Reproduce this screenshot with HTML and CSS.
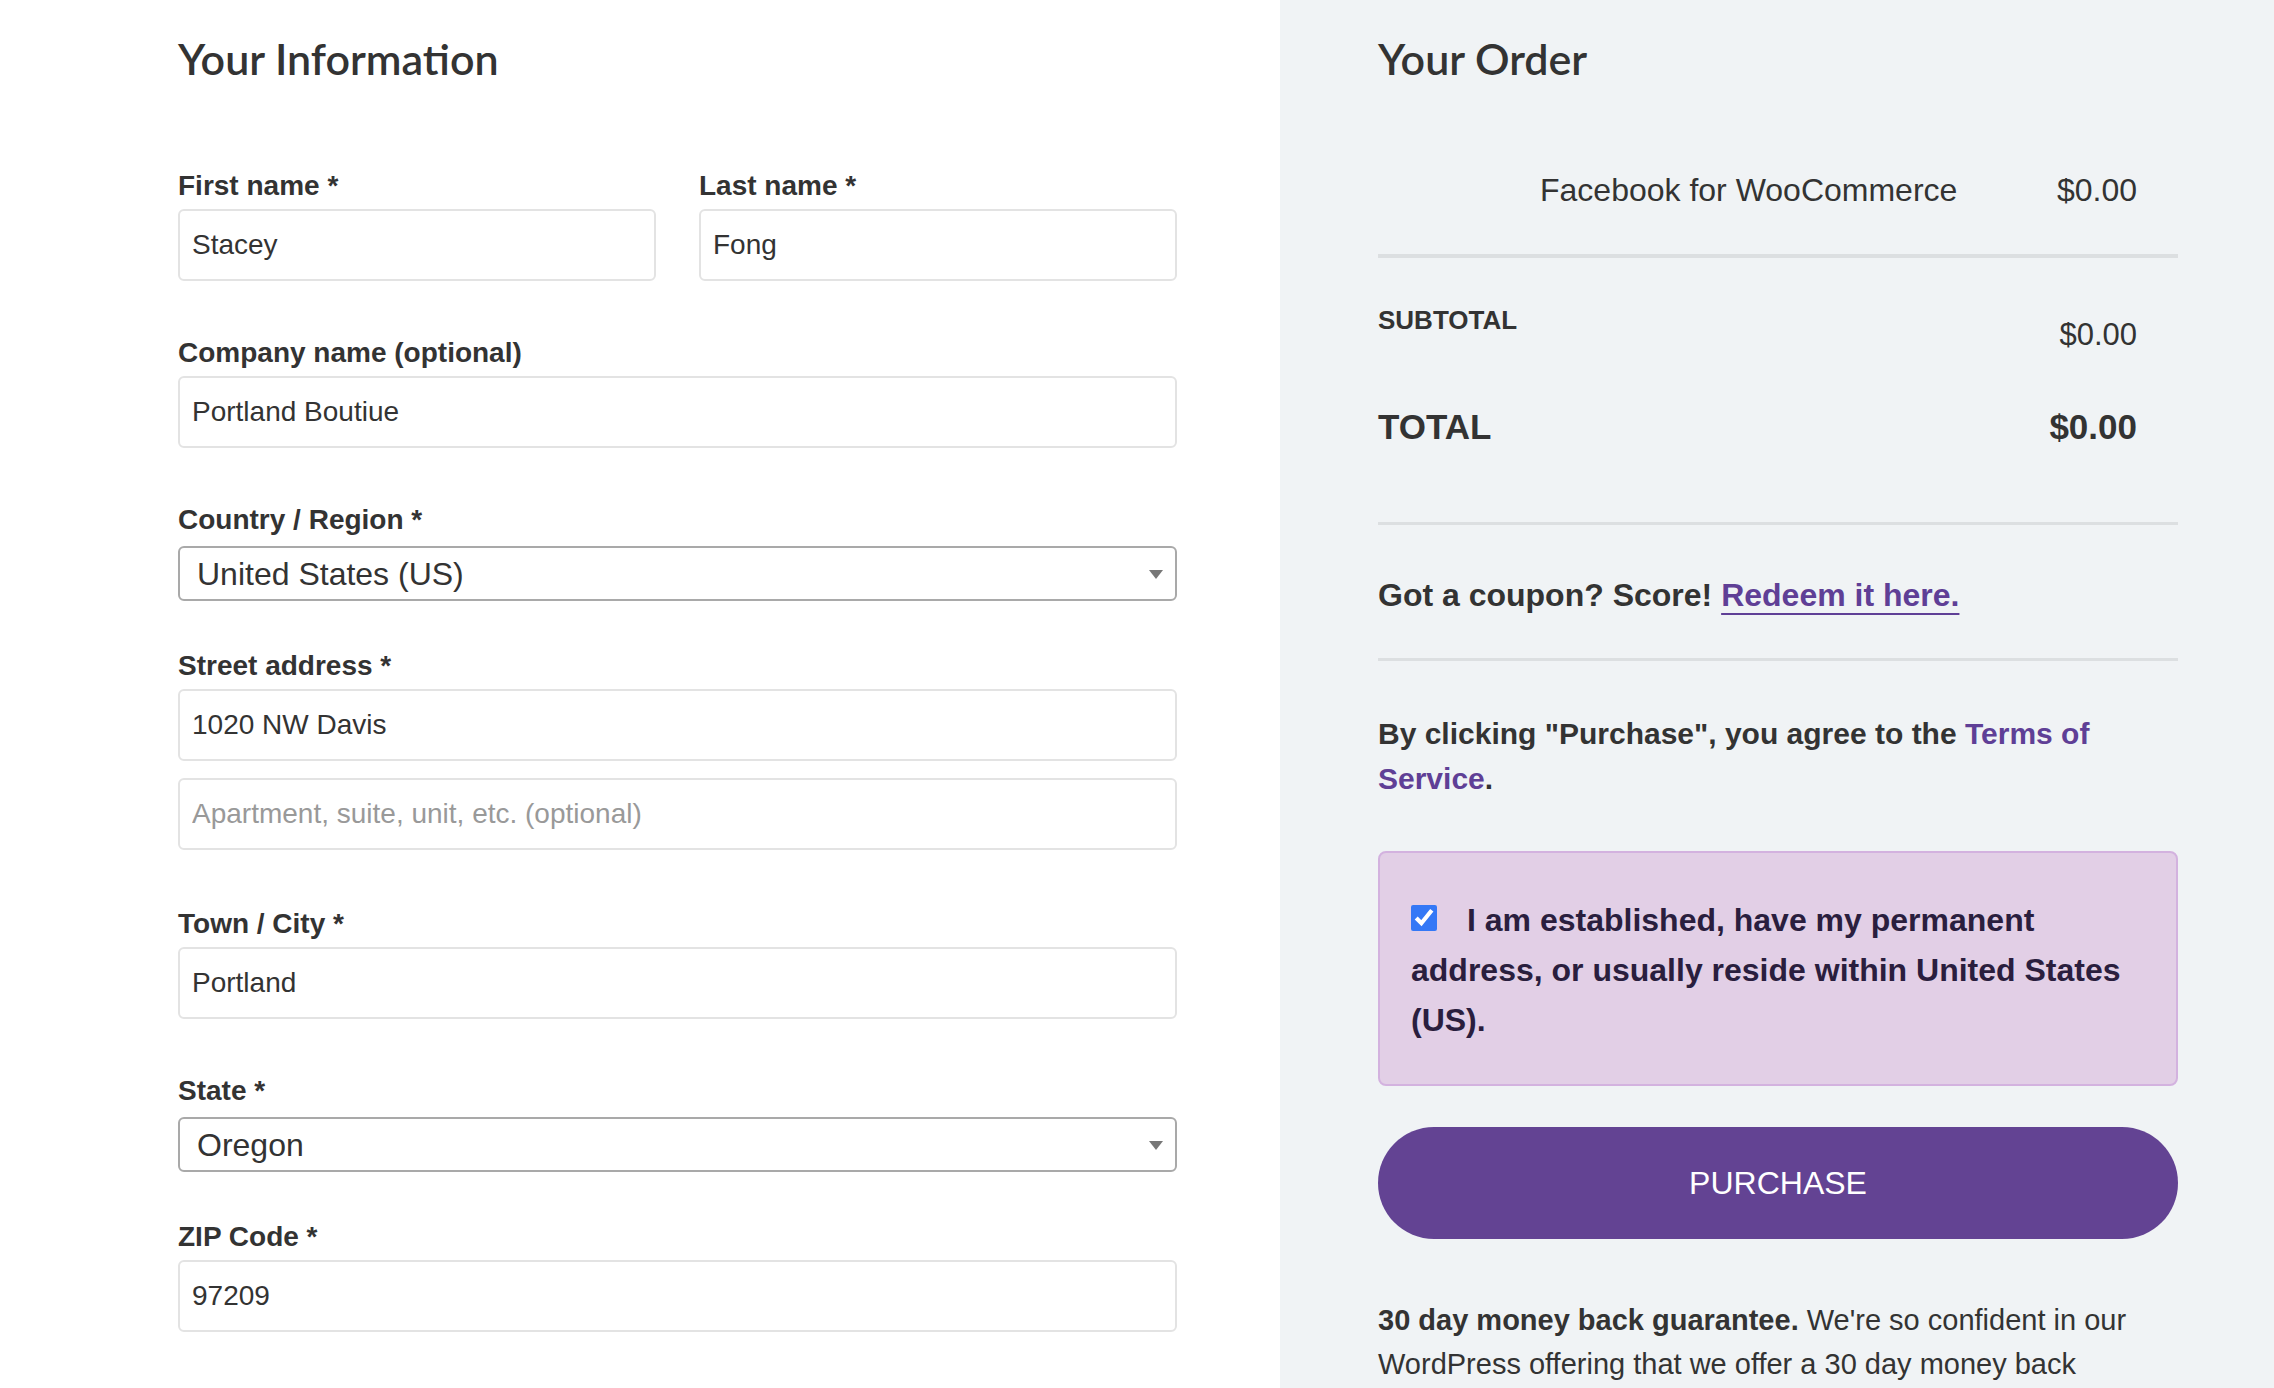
FILE: index.html
```html
<!DOCTYPE html>
<html lang="en">
<head>
  <meta charset="UTF-8">
  <meta name="viewport" content="width=device-width, initial-scale=1.0">
  <title>Checkout</title>
  <link rel="stylesheet" href="styles.css">
</head>
<body>
  <div class="checkout">
    <section class="info">
      <h2 class="section-title">Your Information</h2>
      <form class="info-form">
        <div class="field-row">
          <div class="field">
            <label for="firstName">First name *</label>
            <input type="text" id="firstName" value="Stacey">
          </div>
          <div class="field">
            <label for="lastName">Last name *</label>
            <input type="text" id="lastName" value="Fong">
          </div>
        </div>

        <div class="field">
          <label for="company">Company name (optional)</label>
          <input type="text" id="company" value="Portland Boutiue">
        </div>

        <div class="field field-select">
          <label for="country">Country / Region *</label>
          <div class="select-wrap">
            <select id="country">
              <option>United States (US)</option>
            </select>
          </div>
        </div>

        <div class="field field-street">
          <label for="street">Street address *</label>
          <input type="text" id="street" value="1020 NW Davis">
          <input type="text" id="street2" placeholder="Apartment, suite, unit, etc. (optional)">
        </div>

        <div class="field">
          <label for="city">Town / City *</label>
          <input type="text" id="city" value="Portland">
        </div>

        <div class="field field-select">
          <label for="state">State *</label>
          <div class="select-wrap">
            <select id="state">
              <option>Oregon</option>
            </select>
          </div>
        </div>

        <div class="field">
          <label for="zip">ZIP Code *</label>
          <input type="text" id="zip" value="97209">
        </div>
      </form>
    </section>

    <aside class="order">
      <h2 class="section-title">Your Order</h2>

      <div class="order-item">
        <span class="item-thumb"></span>
        <span class="item-name">Facebook for WooCommerce</span>
        <span class="item-price">$0.00</span>
      </div>

      <div class="totals">
        <div class="totals-row subtotal">
          <span class="totals-label">SUBTOTAL</span>
          <span class="totals-value">$0.00</span>
        </div>
        <div class="totals-row total">
          <span>TOTAL</span>
          <span>$0.00</span>
        </div>
      </div>

      <p class="coupon">Got a coupon? Score! <a href="#">Redeem it here.</a></p>

      <p class="terms">By clicking "Purchase", you agree to the <a href="#">Terms of Service</a>.</p>

      <div class="residency">
        <label><input type="checkbox" checked>I am established, have my permanent address, or usually reside within United States (US).</label>
      </div>

      <button class="purchase-btn" type="button">PURCHASE</button>

      <p class="guarantee"><strong>30 day money back guarantee.</strong> We're so confident in our WordPress offering that we offer a 30 day money back guarantee if you are unhappy with our products or service.</p>
    </aside>
  </div>
</body>
</html>
```

FILE: styles.css
```css
body {
  margin: 0;
  font-family: "Liberation Sans", Arial, sans-serif;
  color: #333;
}

.checkout {
  display: flex;
  min-height: 100vh;
}

.info {
  width: 1280px;
  flex-shrink: 0;
  padding: 32px 0 40px 178px;
  box-sizing: border-box;
  background: #fff;
}

.info-form {
  width: 999px;
}

.section-title {
  margin: 0 0 84px;
  font-family: Lato, "Liberation Sans", sans-serif;
  font-size: 43px;
  line-height: 53px;
  font-weight: 600;
  color: #333;
}

/* Form fields */
.field-row {
  display: grid;
  grid-template-columns: 1fr 1fr;
  column-gap: 43px;
}

.field {
  margin-bottom: 55px;
}

.field label {
  display: block;
  margin-bottom: 6px;
  font-size: 28px;
  line-height: 34px;
  font-weight: 700;
}

.field input {
  display: block;
  width: 100%;
  height: 72px;
  box-sizing: border-box;
  padding: 0 12px;
  border: 2px solid #e3e3e3;
  border-radius: 6px;
  font-family: inherit;
  font-size: 28px;
  color: #333;
  background: #fff;
}

.field input::placeholder {
  color: #999;
}

.field-street {
  margin-bottom: 57px;
}

.field-street input + input {
  margin-top: 17px;
}

.field-select {
  margin-bottom: 48px;
}

.select-wrap {
  position: relative;
  margin-top: 9px;
}

.select-wrap select {
  display: block;
  width: 100%;
  height: 55px;
  padding: 0 40px 0 17px;
  border: 2px solid #a9a9a9;
  border-radius: 6px;
  background: #fff;
  font-family: inherit;
  font-size: 32px;
  color: #333;
  appearance: none;
  -webkit-appearance: none;
}

.select-wrap::after {
  content: "";
  position: absolute;
  right: 14px;
  top: 50%;
  margin-top: -4px;
  border-left: 7px solid transparent;
  border-right: 7px solid transparent;
  border-top: 9px solid #777;
}

/* Order summary */
.order {
  flex: 1;
  padding: 32px 96px 60px 98px;
  background: #f0f3f5;
}

.order .section-title {
  margin-bottom: 85px;
}

.order-item {
  display: grid;
  grid-template-columns: 162px 1fr auto;
  padding: 0 41px 44px 0;
  border-bottom: 4px solid #dcdfe1;
  font-size: 32px;
  line-height: 40px;
}

.totals {
  padding-bottom: 74px;
  border-bottom: 3px solid #dcdfe1;
}

.totals-row {
  display: flex;
  justify-content: space-between;
  align-items: flex-start;
  padding-right: 41px;
}

.subtotal {
  margin-top: 46px;
}

.subtotal .totals-label {
  font-size: 26px;
  line-height: 32px;
  font-weight: 700;
}

.subtotal .totals-value {
  margin-top: 11px;
  font-size: 31px;
  line-height: 40px;
}

.total {
  margin-top: 51px;
  font-size: 35px;
  line-height: 42px;
  font-weight: 700;
}

.coupon {
  margin: 50px 0 0;
  padding-bottom: 43px;
  border-bottom: 3px solid #dcdfe1;
  font-size: 32px;
  line-height: 40px;
  font-weight: 700;
}

.coupon a {
  color: #5f3f96;
  text-decoration: underline;
  text-decoration-thickness: 2px;
  text-underline-offset: 7px;
}

.terms {
  margin: 50px 0 50px;
  font-size: 30px;
  line-height: 45px;
  font-weight: 700;
}

.terms a {
  color: #5f3f96;
  text-decoration: none;
}

.residency {
  padding: 42px 33px 39px 31px;
  border: 2px solid #d3b2df;
  border-radius: 8px;
  background: #e2cfe6;
  color: #2a1e3e;
  font-size: 32px;
  line-height: 50px;
  font-weight: 700;
}

.residency input {
  width: 26px;
  height: 26px;
  margin: 0 30px 0 0;
  accent-color: #3478f6;
  vertical-align: baseline;
}

.purchase-btn {
  display: block;
  width: 100%;
  height: 112px;
  margin-top: 41px;
  border: none;
  border-radius: 56px;
  background: #634393;
  color: #fff;
  font-family: inherit;
  font-size: 32px;
  cursor: pointer;
}

.purchase-btn:hover {
  background: #56397f;
}

.guarantee {
  margin: 59px 0 0;
  font-size: 29px;
  line-height: 44px;
}
```
